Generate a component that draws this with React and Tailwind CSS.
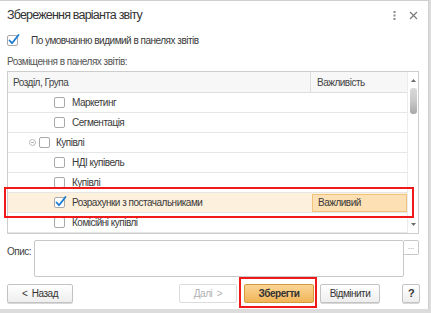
import React from "react";

const font = { fontFamily: '"Liberation Sans", Arial, sans-serif' };

function Box({ checked = false }) {
  return (
    <svg width="14" height="13" viewBox="0 0 14 13" className="shrink-0 overflow-visible">
      <rect x="0.5" y="1.5" width="10" height="10" rx="1.5" fill="#fff" stroke="#a9a9a9" />
      {checked && (
        <path d="M2.5 6.5 L5 9.2 L11.5 1" fill="none" stroke="#1b7bd1" strokeWidth="1.8" strokeLinecap="round" strokeLinejoin="round" />
      )}
    </svg>
  );
}

function Row({ level, label, checked, parent, important, highlight }) {
  return (
    <div className={`flex h-[20px] border-b border-[#e6e6e6] ${highlight ? "bg-[#fdf0dc]" : ""}`}>
      <div className="flex w-[303px] items-center">
        {parent ? (
          <>
            <svg width="7" height="7" viewBox="0 0 7 7" className="ml-[21px] mr-[3px]">
              <circle cx="3.5" cy="3.5" r="3" fill="none" stroke="#b8b8b8" />
              <path d="M2 3.5 H5" stroke="#b8b8b8" />
            </svg>
            <Box checked={checked} />
            <span className="ml-[3px]">{label}</span>
          </>
        ) : (
          <>
            <div className={level === 2 ? "w-[46px]" : "w-[33px]"} />
            <Box checked={checked} />
            <span className="ml-[4px]">{label}</span>
          </>
        )}
      </div>
      <div className="flex w-[96px] items-center">
        {important && (
          <div className="ml-[1px] flex h-[18px] w-[96px] items-center border border-[#f1c47e] bg-[#fde0b3] pl-[5px]">
            {important}
          </div>
        )}
      </div>
    </div>
  );
}

function Btn({ children, className = "", disabled, primary }) {
  return (
    <div
      className={`flex h-[19px] items-center justify-center rounded-[2px] border text-[10px] ${
        primary
          ? "border-[#d49a3c] bg-gradient-to-b from-[#fad596] to-[#f1b556] font-bold text-[#333]"
          : disabled
          ? "border-[#dcdcdc] bg-white text-[#b0b0b0]"
          : "border-[#c3c3c3] bg-gradient-to-b from-white to-[#eeeeee] text-[#333] shadow-[0_1px_0_#d8d8d8]"
      } ${className}`}
    >
      {children}
    </div>
  );
}

export default function App() {
  return (
    <div className="h-[313px] w-[431px] bg-[#dcdcdc]" style={font}>
      <div className="relative flex h-[309px] w-[429px] flex-col border-t border-r border-[#cfcfcf] bg-white text-[10px] tracking-[-0.5px] text-[#3a3a3a]">
        {/* title */}
        <div className="flex h-[28px] items-center pl-[7px] pr-[10px]">
          <span className="text-[12.5px] tracking-[-0.8px] text-[#333]">Збереження варіанта звіту</span>
          <div className="ml-auto flex items-center gap-[13px]">
            <svg width="3" height="9" viewBox="0 0 3 9">
              <rect x="0.5" y="0" width="2" height="2" fill="#8a8a8a" />
              <rect x="0.5" y="3.5" width="2" height="2" fill="#8a8a8a" />
              <rect x="0.5" y="7" width="2" height="2" fill="#8a8a8a" />
            </svg>
            <svg width="9" height="9" viewBox="0 0 9 9">
              <path d="M1 1 L8 8 M8 1 L1 8" stroke="#7a7a7a" strokeWidth="1.2" />
            </svg>
          </div>
        </div>

        {/* default visible */}
        <div className="flex h-[22px] items-center pl-[7px]">
          <Box checked />
          <span className="ml-[10px]">По умовчанню видимий в панелях звітів</span>
        </div>

        <div className="flex h-[20px] items-center pl-[7px] text-[#555]">Розміщення в панелях звітів:</div>

        {/* tree table */}
        <div className="relative ml-[7px] flex h-[163px] w-[412px] border border-[#cdcdcd]">
          <div className="w-[399px] overflow-hidden">
            <div className="flex h-[21px] border-b border-[#dedede] bg-[#f7f7f7] text-[#444]">
              <div className="flex w-[303px] items-center border-r border-[#dedede] pl-[5px]">Розділ, Група</div>
              <div className="flex items-center pl-[6px]">Важливість</div>
            </div>
            <Row level={2} label="Маркетинг" />
            <Row level={2} label="Сегментація" />
            <Row parent label="Купівлі" />
            <Row level={2} label="НДІ купівель" />
            <Row level={2} label="Купівлі" />
            <Row level={2} label="Розрахунки з постачальниками" checked important="Важливий" highlight />
            <Row level={2} label="Комісійні купівлі" />
          </div>
          <div className="relative w-[11px] border-l border-[#ececec] bg-white">
            <svg width="5" height="3" viewBox="0 0 5 3" className="absolute left-[3px] top-[7px]">
              <path d="M0 3 L2.5 0 L5 3 Z" fill="#6a6a6a" />
            </svg>
            <div className="absolute left-[2px] top-[16px] h-[26px] w-[7px] rounded-[3px] bg-gradient-to-b from-[#dadada] via-[#c9c9c9] to-[#a8a8a8]" />
            <svg width="5" height="3" viewBox="0 0 5 3" className="absolute bottom-[7px] left-[3px]">
              <path d="M0 0 L2.5 3 L5 0 Z" fill="#6a6a6a" />
            </svg>
          </div>
        </div>

        {/* description */}
        <div className="mt-[6px] flex pl-[7px]">
          <span className="w-[27px] pt-[4px] text-[#444]">Опис:</span>
          <div className="h-[37px] w-[370px] rounded-[2px] border border-[#c8c8c8]" />
          <div className="flex h-[15px] w-[15px] items-center justify-center rounded-r-[2px] border border-l-0 border-[#c8c8c8] pb-[2px] text-[8px] leading-[8px] tracking-normal text-[#888]">
            ...
          </div>
        </div>

        {/* buttons */}
        <div className="mt-[7px] flex pl-[7px]">
          <Btn className="w-[66px]">&lt;&nbsp; Назад</Btn>
          <Btn disabled className="ml-[106px] w-[58px]">Далі &nbsp;&gt;</Btn>
          <Btn primary className="ml-[7px] w-[70px]">Зберегти</Btn>
          <Btn className="ml-[6px] w-[60px]">Відмінити</Btn>
          <Btn className="ml-[22px] w-[18px] text-[11px] font-bold">?</Btn>
        </div>

        {/* annotation boxes */}
        <div className="pointer-events-none absolute left-[4px] top-[186px] h-[31px] w-[410px] border-2 border-[#f01818]" />
        <div className="pointer-events-none absolute left-[239px] top-[276px] h-[31px] w-[78px] border-2 border-[#f01818]" />
      </div>
    </div>
  );
}
